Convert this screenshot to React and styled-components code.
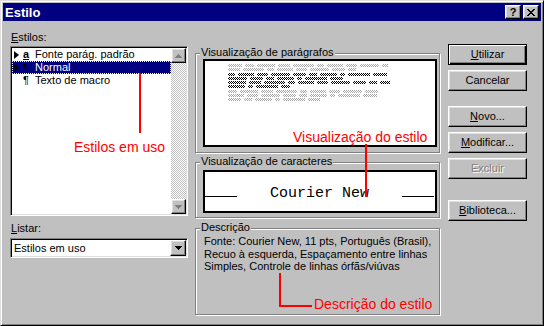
import React from 'react';
import styled, { createGlobalStyle, css } from 'styled-components';

const GlobalStyle = createGlobalStyle`
  html, body {
    margin: 0;
    padding: 0;
    background: #c0c0c0;
  }
  body {
    font-family: "Liberation Sans", Arial, sans-serif;
    font-size: 11px;
    color: #000;
  }
  * {
    box-sizing: border-box;
  }
`;

const raised = css`
  border: 1px solid;
  border-color: #fff #000 #000 #fff;
  box-shadow: inset -1px -1px 0 #808080, inset 1px 1px 0 #dfdfdf;
  background: #c0c0c0;
`;

const sunken = css`
  border: 1px solid;
  border-color: #808080 #fff #fff #808080;
  box-shadow: inset 1px 1px 0 #000, inset -1px -1px 0 #dfdfdf;
  padding: 1px;
  background: #fff;
`;

const checker = (fg) => `repeating-conic-gradient(${fg} 0 25%, #fff 0 50%) 0 0 / 2px 2px`;

const Window = styled.div`
  position: relative;
  width: 544px;
  height: 326px;
  display: flex;
  flex-direction: column;
  padding: 2px;
  background: #c0c0c0;
  border: 1px solid;
  border-color: #dfdfdf #000 #000 #dfdfdf;
  box-shadow: inset 1px 1px 0 #fff, inset -1px -1px 0 #808080;
`;

const TitleBar = styled.div`
  height: 18px;
  display: flex;
  align-items: center;
  padding: 0 2px 0 2px;
  background: #000080;
  color: #fff;
  font-size: 13px;
  font-weight: bold;
`;

const TitleButtons = styled.div`
  margin-left: auto;
  display: flex;
  gap: 2px;
`;

const CaptionButton = styled.div`
  ${raised};
  width: 16px;
  height: 14px;
  display: flex;
  align-items: center;
  justify-content: center;
  color: #000;
  font-size: 11px;
  font-weight: bold;
  line-height: 12px;
`;

const Body = styled.div`
  flex: 1;
  display: flex;
  padding: 10px 0 0 7px;
`;

const LeftCol = styled.div`
  width: 178px;
  display: flex;
  flex-direction: column;
`;

const Label = styled.div`
  height: 13px;
  line-height: 13px;
  padding-left: 1px;
  margin-top: ${(p) => p.$mt || 0}px;
`;

const ListBox = styled.div`
  ${sunken};
  margin-top: 2px;
  height: 170px;
  display: flex;
`;

const ListItems = styled.div`
  flex: 1;
  display: flex;
  flex-direction: column;
`;

const Row = styled.div`
  height: 13px;
  display: flex;
  align-items: center;
  padding-left: 2px;
  line-height: 13px;
  white-space: nowrap;
  ${(p) =>
    p.$selected &&
    css`
      background: #000080;
      color: #fff;
      outline: 1px dotted #ffff80;
      outline-offset: -1px;
    `}
`;

const Marker = styled.span`
  width: 5px;
  height: 8px;
  margin-right: 4px;
  border-left: 5px solid ${(p) => (p.$show ? '#000' : 'transparent')};
  border-top: 4px solid transparent;
  border-bottom: 4px solid transparent;
`;

const Glyph = styled.span`
  width: 12px;
  color: #000;
  font-weight: ${(p) => (p.$char ? 'bold' : 'normal')};
  text-decoration: ${(p) => (p.$char ? 'underline' : 'none')};
`;

const ScrollBar = styled.div`
  width: 15px;
  display: flex;
  flex-direction: column;
  justify-content: space-between;
  background: ${checker('#c0c0c0')};
`;

const ArrowButton = styled.div`
  ${raised};
  width: ${(p) => p.$w || 15}px;
  height: ${(p) => p.$h || 15}px;
  display: flex;
  align-items: center;
  justify-content: center;
`;

const Combo = styled.div`
  ${sunken};
  margin-top: 3px;
  height: 20px;
  display: flex;
`;

const ComboText = styled.div`
  flex: 1;
  padding-left: 2px;
  line-height: 16px;
`;

const MiddleCol = styled.div`
  width: 245px;
  margin-left: 7px;
  display: flex;
  flex-direction: column;
`;

const Group = styled.div`
  position: relative;
  display: flex;
  flex-direction: column;
  margin-top: ${(p) => p.$mt}px;
  height: ${(p) => p.$h}px;
  padding: ${(p) => p.$pad};
  border: 1px solid #808080;
  box-shadow: inset 1px 1px 0 #fff, 1px 1px 0 #fff;
`;

const Legend = styled.div`
  position: absolute;
  top: -8px;
  left: 4px;
  padding: 0 1px;
  line-height: 13px;
  background: #c0c0c0;
`;

const PreviewBox = styled.div`
  flex: 1;
  background: #fff;
  border: 2px solid #000;
`;

const ParaPreview = styled(PreviewBox)`
  padding: 3px 0 0 23px;
  display: flex;
  flex-direction: column;
  gap: 2px;
`;

const LineGroup = styled.div`
  display: flex;
  flex-direction: column;
  gap: 1px;
`;

const PreviewLine = styled.div`
  height: 3px;
  display: flex;
  gap: 3px;
`;

const Word = styled.span`
  height: 3px;
  background: ${(p) => (p.$dark ? checker('#000') : checker('#a8a8a8'))};
`;

const CharPreview = styled(PreviewBox)`
  display: flex;
  align-items: flex-end;
  justify-content: space-between;
  padding: 0 1px 10.5px 0;
`;

const Rule = styled.span`
  width: 32px;
  height: 1px;
  margin-bottom: 4px;
  background: #000;
`;

const Mono = styled.span`
  font-family: "Liberation Mono", "Courier New", monospace;
  font-size: 15px;
  line-height: 15px;
`;

const DescText = styled.div`
  line-height: 12.5px;
  white-space: nowrap;
`;

const RightCol = styled.div`
  width: 79px;
  margin-left: 8px;
  padding-top: 13px;
  display: flex;
  flex-direction: column;
`;

const Button = styled.div`
  height: 21px;
  margin-top: ${(p) => p.$mt || 0}px;
  display: flex;
  align-items: center;
  justify-content: center;
  line-height: 13px;
  ${raised};
  ${(p) =>
    p.$default &&
    css`
      border: 1px solid #000;
      box-shadow: inset 1px 1px 0 #fff, inset -1px -1px 0 #000, inset -2px -2px 0 #808080;
    `}
  ${(p) =>
    p.$disabled &&
    css`
      color: #808080;
      text-shadow: 1px 1px 0 #fff;
    `}
`;

const Annotations = styled.div`
  position: absolute;
  top: -1px;
  left: -1px;
  pointer-events: none;
`;

const RedLine = styled.div`
  position: absolute;
  left: ${(p) => p.$x}px;
  top: ${(p) => p.$y}px;
  width: ${(p) => p.$w}px;
  height: ${(p) => p.$h}px;
  background: #ff0000;
`;

const RedText = styled.div`
  position: absolute;
  left: ${(p) => p.$x}px;
  top: ${(p) => p.$y}px;
  color: #ff0000;
  font-size: 14px;
  line-height: 14px;
  white-space: nowrap;
`;

const Arrow = ({ up, color = '#000' }) => (
  <svg width="7" height="4" viewBox="0 0 7 4" style={{ display: 'block' }}>
    <path d={up ? 'M3 0h1v1h1v1h1v1h1v1H0V3h1V2h1V1h1z' : 'M0 0h7v1H6v1H5v1H4v1H3V3H2V2H1V1H0z'} fill={color} />
  </svg>
);

const WORDS = [14, 9, 18, 12, 21, 7, 16, 11, 19, 13, 8, 17, 5, 22];

const wordsFor = (width, seed) => {
  const out = [];
  let x = 0;
  let i = seed;
  while (x < width) {
    let w = WORDS[i % WORDS.length];
    if (x + w > width) w = width - x;
    if (w >= 3) out.push(w);
    x += w + 3;
    i++;
  }
  return out;
};

const Line = ({ width, seed, dark }) => (
  <PreviewLine>
    {wordsFor(width, seed).map((w, i) => (
      <Word key={i} $dark={dark} style={{ width: w }} />
    ))}
  </PreviewLine>
);

const styles = [
  { marker: true, glyph: 'a', char: true, label: 'Fonte parág. padrão' },
  { marker: true, glyph: '¶', label: 'Normal', selected: true },
  { marker: false, glyph: '¶', label: 'Texto de macro' },
];

const App = () => (
  <>
    <GlobalStyle />
    <Window>
      <TitleBar>
        Estilo
        <TitleButtons>
          <CaptionButton>?</CaptionButton>
          <CaptionButton>
            <svg width="8" height="7" viewBox="0 0 8 7">
              <path d="M0 0h2v1h1v1h2V1h1V0h2v1H7v1H6v1H5v1h1v1h1v1h1v1H6V6H5V5H3v1H2v1H0V6h1V5h1V4h1V3H2V2H1V1H0z" fill="#000" />
            </svg>
          </CaptionButton>
        </TitleButtons>
      </TitleBar>

      <Body>
        <LeftCol>
          <Label>
            <u>E</u>stilos:
          </Label>
          <ListBox>
            <ListItems>
              {styles.map((s) => (
                <Row key={s.label} $selected={s.selected}>
                  <Marker $show={s.marker} />
                  <Glyph $char={s.char}>{s.glyph}</Glyph>
                  {s.label}
                </Row>
              ))}
            </ListItems>
            <ScrollBar>
              <ArrowButton>
                <Arrow up color="#808080" />
              </ArrowButton>
              <ArrowButton>
                <Arrow color="#808080" />
              </ArrowButton>
            </ScrollBar>
          </ListBox>

          <Label $mt={6}>
            <u>L</u>istar:
          </Label>
          <Combo>
            <ComboText>Estilos em uso</ComboText>
            <ArrowButton $w={16} $h={16}>
              <Arrow />
            </ArrowButton>
          </Combo>
        </LeftCol>

        <MiddleCol>
          <Group $mt={22} $h={100} $pad="5px 2px 5px 7px">
            <Legend>Visualização de parágrafos</Legend>
            <ParaPreview>
              <LineGroup>
                <Line width={160} seed={0} />
                <Line width={129} seed={3} />
              </LineGroup>
              <LineGroup>
                <Line width={162} seed={5} dark />
                <Line width={115} seed={8} dark />
                <Line width={162} seed={2} dark />
                <Line width={62} seed={11} dark />
              </LineGroup>
              <LineGroup>
                <Line width={154} seed={1} />
                <Line width={154} seed={6} />
                <Line width={92} seed={9} />
              </LineGroup>
            </ParaPreview>
          </Group>

          <Group $mt={9} $h={56} $pad="7px 2px 4px 7px">
            <Legend>Visualização de caracteres</Legend>
            <CharPreview>
              <Rule />
              <Mono>Courier New</Mono>
              <Rule />
            </CharPreview>
          </Group>

          <Group $mt={10} $h={87} $pad="6px 4px 0 8px">
            <Legend>Descrição</Legend>
            <DescText>
              Fonte: Courier New, 11 pts, Português (Brasil),
              <br />
              Recuo à esquerda, Espaçamento entre linhas
              <br />
              Simples, Controle de linhas órfãs/viúvas
            </DescText>
          </Group>
        </MiddleCol>

        <RightCol>
          <Button $default>
            <span>
              <u>U</u>tilizar
            </span>
          </Button>
          <Button $mt={5}>Cancelar</Button>
          <Button $mt={15}>
            <span>
              <u>N</u>ovo...
            </span>
          </Button>
          <Button $mt={5}>
            <span>
              <u>M</u>odificar...
            </span>
          </Button>
          <Button $mt={5} $disabled>
            Excluir
          </Button>
          <Button $mt={21}>
            <span>
              <u>B</u>iblioteca...
            </span>
          </Button>
        </RightCol>
      </Body>

      <Annotations>
        <RedLine $x={139} $y={73} $w={2} $h={60} />
        <RedText $x={74} $y={140}>Estilos em uso</RedText>

        <RedText $x={293} $y={130}>Visualização do estilo</RedText>
        <RedLine $x={365} $y={144} $w={2} $h={53} />

        <RedLine $x={279} $y={273} $w={2} $h={34} />
        <RedLine $x={279} $y={305} $w={33} $h={2} />
        <RedText $x={314} $y={297}>Descrição do estilo</RedText>
      </Annotations>
    </Window>
  </>
);

export default App;
